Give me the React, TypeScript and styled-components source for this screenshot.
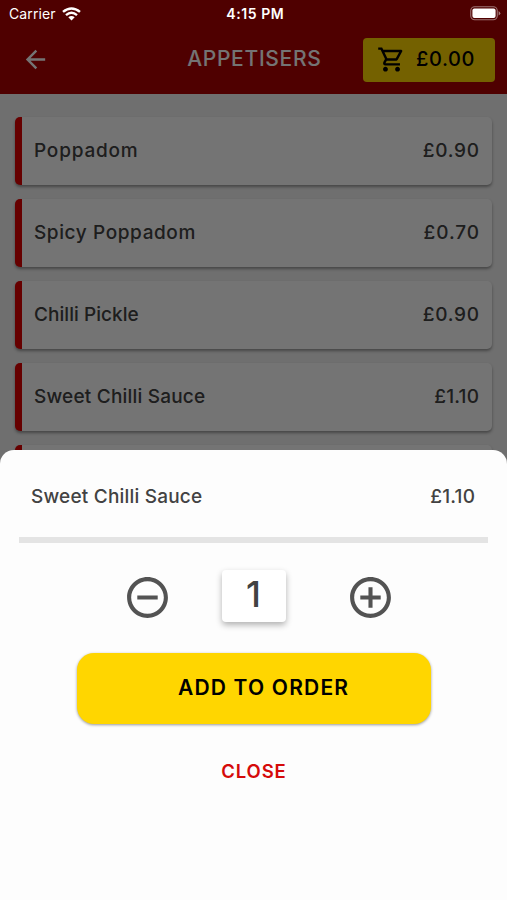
import React, { useState } from 'react';
import styled, { createGlobalStyle } from 'styled-components';
import {
  MdAddCircleOutline,
  MdArrowBack,
  MdOutlineShoppingCart,
  MdRemoveCircleOutline,
} from 'react-icons/md';

const GlobalStyle = createGlobalStyle`
  * { box-sizing: border-box; }
  body { margin: 0; }
  button { border: 0; padding: 0; background: none; font: inherit; color: inherit; cursor: pointer; }
`;

const Screen = styled.div`
  position: relative;
  width: 507px;
  height: 900px;
  overflow: hidden;
  background: #f3f3f3;
  font-family: Inter, 'Liberation Sans', sans-serif;
  color: #424242;
`;

const Header = styled.header`
  display: grid;
  grid-template-columns: 127px 1fr 132px;
  align-items: center;
  height: 94px;
  padding: 25px 12px 0 20px;
  background: #ae0000;
`;

const BackButton = styled.button`
  display: flex;
  width: 30px;
  margin-left: 1px;
  color: #fff;
`;

const Label = styled.span<{ $size: number; $spacing?: number; $weight?: number }>`
  font-size: ${p => p.$size}px;
  line-height: 26px;
  letter-spacing: ${p => p.$spacing ?? 0}px;
  margin-right: ${p => -(p.$spacing ?? 0)}px;
  font-weight: ${p => p.$weight ?? 500};
  white-space: nowrap;
`;

const Title = styled.h1`
  display: flex;
  justify-content: center;
  margin: 0 0 1px;
  width: 214px;
  color: #fff;
`;

const CartButton = styled.button`
  display: flex;
  align-items: center;
  gap: 10px;
  height: 44px;
  padding: 0 0 1px 14px;
  border-radius: 4px;
  background: #ffd600;
  color: #000;
`;

const Menu = styled.main`
  display: flex;
  flex-direction: column;
  gap: 14px;
  padding: 23px 15px 0;
`;

const MenuRow = styled.div`
  display: flex;
  flex: none;
  align-items: center;
  justify-content: space-between;
  height: 68px;
  padding: 0 13px 0 12px;
  border-left: 7px solid #e00000;
  border-radius: 5px;
  background: #fff;
  box-shadow: 0 2px 3px rgba(0, 0, 0, 0.36);
`;

const Scrim = styled.div`
  position: absolute;
  inset: 0;
  background: rgba(0, 0, 0, 0.545);
`;

const StatusBar = styled.div`
  position: absolute;
  inset: 0 0 auto;
  display: grid;
  grid-template-columns: 1fr auto 1fr;
  align-items: center;
  height: 27px;
  padding: 0 6px 0 9px;
  color: #fff;
`;

const Carrier = styled.div`
  display: flex;
  align-items: center;
  gap: 6px;
`;

const Battery = styled.svg`
  justify-self: end;
`;

const Sheet = styled.section`
  position: absolute;
  inset: 450px 0 0;
  display: flex;
  flex-direction: column;
  align-items: center;
  border-radius: 14px 14px 0 0;
  background: #fdfdfd;
`;

const SheetHeading = styled.div`
  display: flex;
  align-items: center;
  justify-content: space-between;
  width: 469px;
  height: 93px;
  padding: 6px 13px 0 12px;
  border-bottom: 6px solid #e4e4e4;
`;

const Stepper = styled.div`
  display: grid;
  grid-template-columns: 49px 64px 49px;
  align-items: center;
  justify-content: space-between;
  width: 272px;
  height: 52px;
  margin-top: 27px;
`;

const StepButton = styled.button`
  display: flex;
  margin: 2px -5px 0 5px;
  color: #535353;
`;

const Quantity = styled.div`
  display: flex;
  align-items: center;
  justify-content: center;
  height: 52px;
  padding-bottom: 4px;
  border-radius: 4px;
  background: #fff;
  box-shadow: 0 3px 6px rgba(0, 0, 0, 0.3);
`;

const AddButton = styled.button`
  width: 354px;
  height: 71px;
  margin-top: 31px;
  padding: 0 0 2px 19px;
  border-radius: 17px;
  background: #ffd600;
  color: #000;
  box-shadow: 0 1px 3px rgba(0, 0, 0, 0.4);
`;

const CloseButton = styled.button`
  margin-top: 34px;
  color: #d50a0a;
`;

const items = [
  { name: 'Poppadom', price: '£0.90', nameSpacing: 0.8, priceSpacing: 0.7 },
  { name: 'Spicy Poppadom', price: '£0.70', nameSpacing: 0.6, priceSpacing: 0.9 },
  { name: 'Chilli Pickle', price: '£0.90', nameSpacing: 0.05, priceSpacing: 0.7 },
  { name: 'Sweet Chilli Sauce', price: '£1.10', nameSpacing: 0.2, priceSpacing: 0.2 },
  { name: '', price: '', nameSpacing: 0, priceSpacing: 0 },
];

export default function App() {
  const [quantity, setQuantity] = useState(1);
  return (
    <Screen>
      <GlobalStyle />
      <Header>
        <BackButton aria-label="Back"><MdArrowBack size={29} /></BackButton>
        <Title><Label $size={21} $spacing={0.7}>APPETISERS</Label></Title>
        <CartButton>
          <MdOutlineShoppingCart size={29} />
          <Label $size={20} $spacing={0.6}>£0.00</Label>
        </CartButton>
      </Header>
      <Menu>
        {items.map((item, i) => (
          <MenuRow key={i}>
            <Label $size={19} $spacing={item.nameSpacing}>{item.name}</Label>
            <Label $size={19} $spacing={item.priceSpacing}>{item.price}</Label>
          </MenuRow>
        ))}
      </Menu>
      <Scrim />
      <StatusBar>
        <Carrier>
          <Label $size={14} $spacing={0.1} $weight={400}>Carrier</Label>
          <svg width="19" height="14" viewBox="0 0 19 14" fill="none" stroke="#fff" strokeWidth="2.5">
            <path d="M1 4.9Q9.5-2 18 4.9" />
            <path d="M4 8.1Q9.5 3.5 15 8.1" />
            <path d="M6.3 10.3Q9.5 7.8 12.7 10.3L9.5 13.6Z" fill="#fff" stroke="none" />
          </svg>
        </Carrier>
        <Label $size={14} $spacing={0.6} $weight={600}>4:15 PM</Label>
        <Battery width="31" height="15" viewBox="0 0 31 15">
          <rect x=".75" y=".75" width="26.5" height="13" rx="4" fill="none" stroke="#fff" strokeOpacity=".45" strokeWidth="1.1" />
          <rect x="2.4" y="2.4" width="23.2" height="9.7" rx="2" fill="#fff" />
          <path d="M28.6 5Q32 7.3 28.6 9.6Z" fill="#fff" fillOpacity=".5" />
        </Battery>
      </StatusBar>
      <Sheet>
        <SheetHeading>
          <Label $size={19} $spacing={0.2}>Sweet Chilli Sauce</Label>
          <Label $size={19} $spacing={0.2}>£1.10</Label>
        </SheetHeading>
        <Stepper>
          <StepButton aria-label="Decrease" onClick={() => setQuantity(q => Math.max(1, q - 1))}>
            <MdRemoveCircleOutline size={49} />
          </StepButton>
          <Quantity><Label $size={36}>{quantity}</Label></Quantity>
          <StepButton aria-label="Increase" onClick={() => setQuantity(q => q + 1)}>
            <MdAddCircleOutline size={49} />
          </StepButton>
        </Stepper>
        <AddButton><Label $size={21} $spacing={1.2} $weight={600}>ADD TO ORDER</Label></AddButton>
        <CloseButton><Label $size={18.5} $spacing={0.9} $weight={600}>CLOSE</Label></CloseButton>
      </Sheet>
    </Screen>
  );
}
